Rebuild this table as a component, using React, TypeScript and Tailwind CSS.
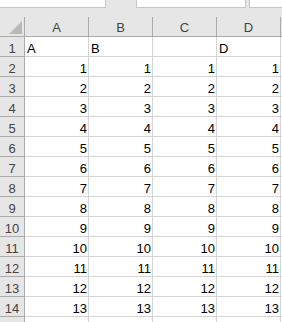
const columns = ["A", "B", "C", "D"];

const rows: (string | number)[][] = [
  ["A", "B", "", "D"],
  ...Array.from({ length: 13 }, (_, i) => [i + 1, i + 1, i + 1, i + 1]),
  ["", "", "", ""],
];

const CornerCell = () => (
  <div className="flex h-[20px] items-end justify-end border-r border-b border-[#ababab] bg-[#e6e6e6] pr-[1px] pb-[1px]">
    <svg width="14" height="14" viewBox="0 0 14 14">
      <polygon points="13,0 13,13 0,13" fill="#b9b9b9" />
    </svg>
  </div>
);

const App = () => {
  return (
    <div
      className="h-[322px] w-[282px] overflow-hidden bg-white text-[13px] text-black"
      style={{ fontFamily: '"Liberation Sans", Arial, sans-serif' }}
    >
      {/* name box / formula bar strip */}
      <div className="flex h-[17px] items-start bg-[#e6e6e6]">
        <div className="h-[8px] w-[106px] border-r border-b border-[#c6c6c6] bg-white" />
        <div className="ml-[30px] h-[8px] w-[110px] border-x border-b border-[#c6c6c6] bg-white" />
        <div className="ml-[3px] h-[8px] flex-1 border-l border-b border-[#c6c6c6] bg-white" />
      </div>

      <div className="grid grid-cols-[25px_64px_64px_64px_64px_1fr]">
        <CornerCell />
        {columns.map((col) => (
          <div
            key={col}
            className="h-[20px] border-r border-b border-[#ababab] bg-[#e6e6e6] pt-[3px] text-center leading-[15px] text-[#444]"
          >
            {col}
          </div>
        ))}
        <div className="h-[20px] border-b border-[#ababab] bg-[#e6e6e6]" />

        {rows.map((row, r) => (
          <Row key={r} index={r + 1} cells={row} showIndex={r < 14} />
        ))}
      </div>
    </div>
  );
};

const Row = ({
  index,
  cells,
  showIndex,
}: {
  index: number;
  cells: (string | number)[];
  showIndex: boolean;
}) => (
  <>
    <div className="h-[20px] border-r border-b border-[#ababab] bg-[#e6e6e6] pt-[4px] text-center leading-[15px] text-[#444]">
      {showIndex ? index : ""}
    </div>
    {cells.map((value, c) => (
      <div
        key={c}
        className={`h-[20px] border-r border-b border-[#d4d4d4] pt-[4px] leading-[15px] whitespace-nowrap ${
          typeof value === "number" ? "pr-[1px] text-right" : "pl-[2px] text-left"
        }`}
      >
        {value}
      </div>
    ))}
    <div className="h-[20px] border-b border-[#d4d4d4]" />
  </>
);

export default App;
